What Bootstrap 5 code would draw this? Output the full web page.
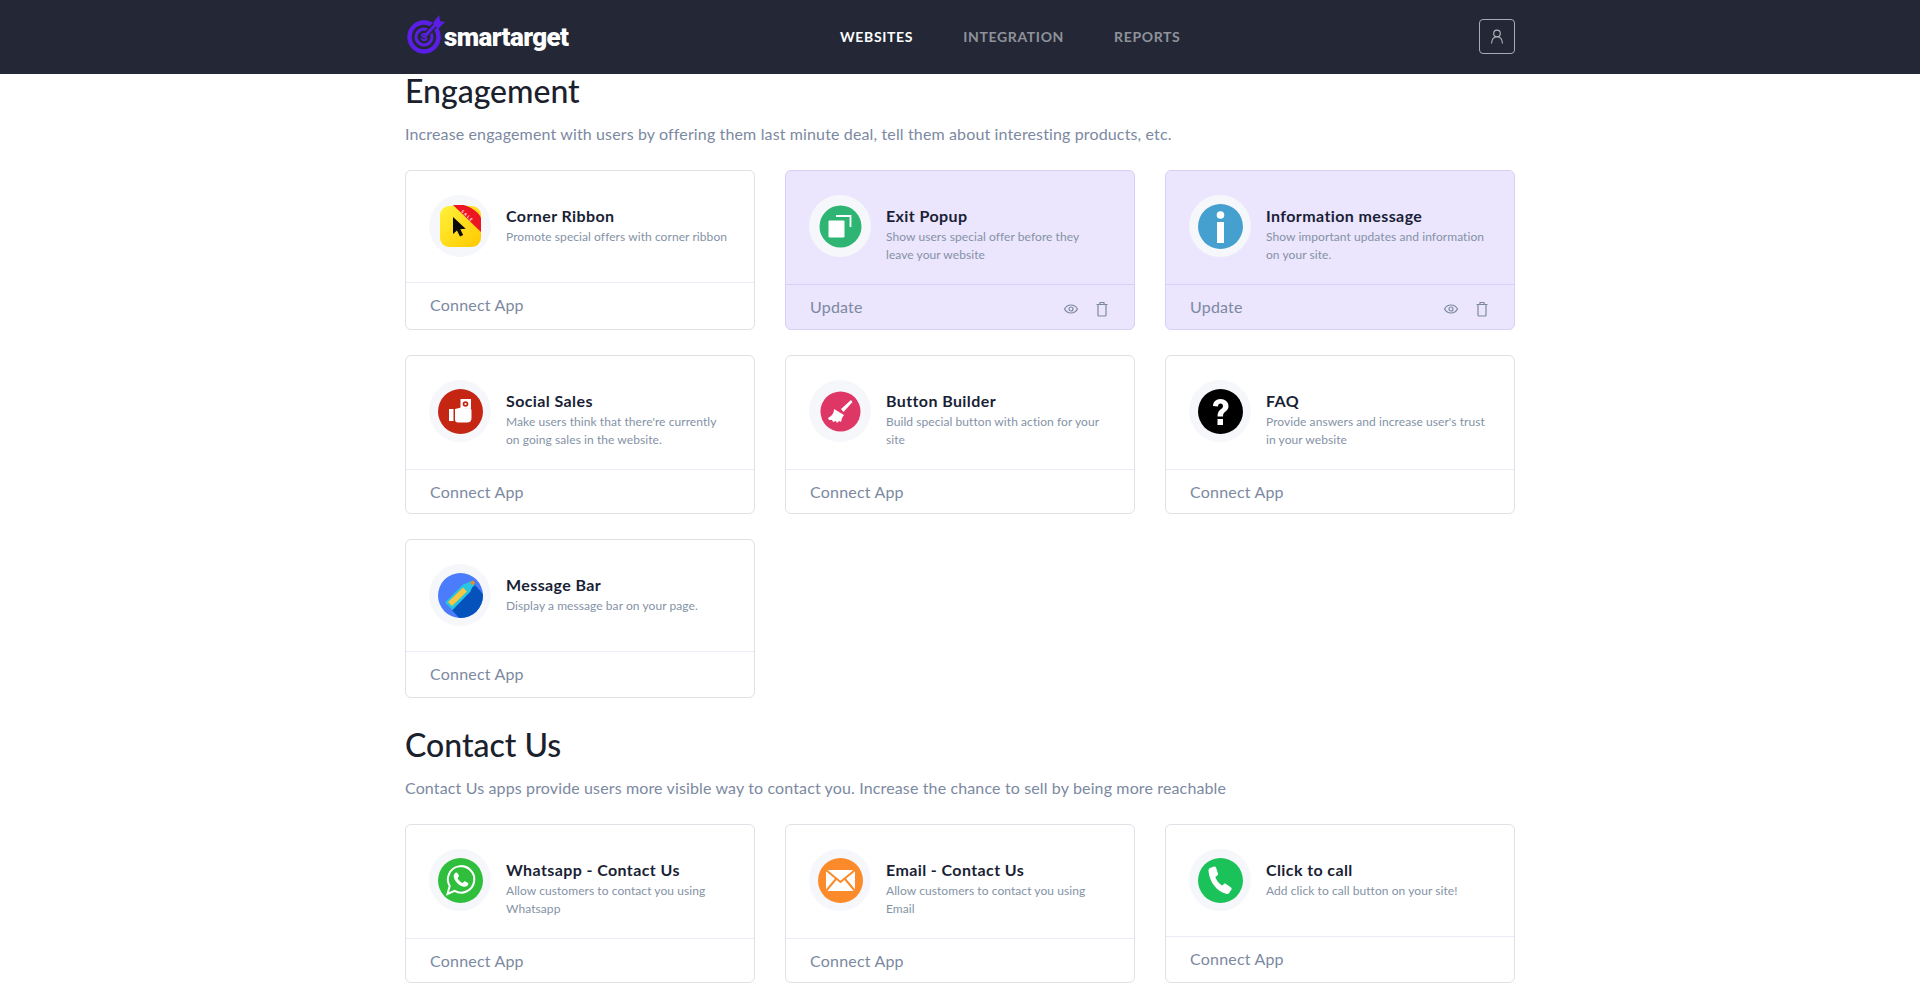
<!DOCTYPE html>
<html lang="en">
<head>
  <meta charset="UTF-8">
  <meta name="viewport" content="width=device-width, initial-scale=1.0">
  <title>Smartarget</title>
  <link href="https://cdn.jsdelivr.net/npm/bootstrap@5.3.3/dist/css/bootstrap.min.css" rel="stylesheet">
  <style>
    body {
      font-family: Lato, "Noto Sans", sans-serif;
      background: #fff;
      color: #1a1f36;
    }

    .page-wrap {
      width: 1110px;
      margin: 0 auto;
    }

    .top-bar {
      height: 74px;
      background: #242836;
    }

    .brand-link {
      width: 435px;
      padding-left: 2px;
      color: #fff;
      font-family: Roboto, sans-serif;
      font-weight: 900;
      font-size: 26px;
      letter-spacing: -0.6px;
      text-decoration: none;
    }

    .brand-link svg {
      margin-right: -1px;
      margin-top: -7px;
    }

    .brand-word {
      margin-top: 1px;
    }

    .top-link {
      font-size: 14px;
      font-weight: 700;
      letter-spacing: 0.65px;
      color: #8f929b;
      text-decoration: none;
      text-transform: uppercase;
      margin-right: 50px;
      margin-bottom: 2px;
    }

    .top-link.current {
      color: #fff;
    }

    .user-btn {
      width: 36px;
      height: 35px;
      margin-bottom: 2px;
      border: 1px solid #a8abb3;
      border-radius: 4px;
      background: transparent;
      padding: 0;
    }

    .section-title {
      font-size: 32px;
      font-weight: 500;
      line-height: 34px;
      margin: 0;
      color: #1a202c;
    }

    .contact-title {
      margin-top: 30px;
    }

    .section-sub {
      font-size: 16px;
      line-height: 24px;
      color: #7c89a1;
      margin: 14px 0 24px;
      letter-spacing: 0.135px;
    }

    .app-row {
      display: grid;
      grid-template-columns: repeat(3, 350px);
      column-gap: 30px;
      row-gap: 25px;
    }

    .app-card {
      min-height: 159px;
      border: 1px solid #e0e0e6;
      border-radius: 6px;
      display: flex;
      flex-direction: column;
    }

    .app-card.active-app {
      background: #ebe5fd;
      border-color: #d9cff7;
    }

    .app-body {
      display: flex;
      padding: 22px 23px 20px;
    }

    .icon-ring {
      flex: 0 0 62px;
      width: 62px;
      height: 62px;
      margin: 2px 15px 5px 0;
      border-radius: 50%;
      background: #f6f7fb;
      display: flex;
      align-items: center;
      justify-content: center;
    }

    .app-name {
      font-size: 16px;
      font-weight: 700;
      line-height: 22px;
      margin: 12px 0 1px;
      color: #1a1f36;
      letter-spacing: 0.4px;
    }

    .app-desc {
      font-size: 12px;
      line-height: 18px;
      margin: 0;
      color: #8492a6;
      letter-spacing: 0.07px;
    }

    .app-foot {
      flex-grow: 1;
      border-top: 1px solid #ecebfa;
      padding: 9.5px 24px;
      font-size: 16px;
      line-height: 24px;
      color: #7c89a1;
      letter-spacing: 0.2px;
    }

    .active-app .app-foot {
      border-top-color: #d9cff7;
      padding-top: 10px;
      padding-bottom: 10px;
    }

    .foot-icons {
      padding-right: 1px;
    }

    .foot-icons svg {
      display: block;
    }
  </style>
</head>
<body>

<!-- Navigation -->
<nav class="top-bar">
  <div class="page-wrap h-100 d-flex align-items-center">
    <a class="brand-link d-flex align-items-center" href="#">
      <svg width="38" height="40" viewBox="0 0 38 40">
        <circle cx="17" cy="23" r="14.5" fill="none" stroke="#5a1ee6" stroke-width="4.5"/>
        <circle cx="17" cy="23" r="8" fill="none" stroke="#5a1ee6" stroke-width="3"/>
        <path d="M17 23L29 10" stroke="#242836" stroke-width="6"/>
        <path d="M18 22L30 9" stroke="#5a1ee6" stroke-width="3"/>
        <path d="M26 9L32 1l1 6 5 1-7 7z" fill="#5a1ee6"/>
        <text x="17" y="27" text-anchor="middle" font-size="11" font-weight="900" fill="#5a1ee6">S</text>
      </svg>
      <span class="brand-word">smartarget</span>
    </a>
    <a class="top-link current" href="#">Websites</a>
    <a class="top-link" href="#">Integration</a>
    <a class="top-link" href="#">Reports</a>
    <button class="user-btn ms-auto d-flex align-items-center justify-content-center" type="button" aria-label="Account">
      <svg width="14" height="15" viewBox="0 0 14 15" fill="none" stroke="#b4b7be" stroke-width="1.1">
        <circle cx="7" cy="4.4" r="3.3"/>
        <path d="M1.5 14.5c.3-4 2.200-6.800 5.500-6.800s5.200 2.800 5.500 6.800"/>
      </svg>
    </button>
  </div>
</nav>

<main class="page-wrap">

  <!-- Engagement -->
  <h2 class="section-title">Engagement</h2>
  <p class="section-sub">Increase engagement with users by offering them last minute deal, tell them about interesting products, etc.</p>

  <div class="app-row">
    <div class="app-card">
      <div class="app-body">
        <div class="icon-ring">
          <svg width="41" height="42" viewBox="0 0 41 42">
            <defs>
              <linearGradient id="ribbonBg" x1="0" y1="0" x2="1" y2="1">
                <stop offset="0" stop-color="#fff23a"/>
                <stop offset="1" stop-color="#ffc800"/>
              </linearGradient>
            </defs>
            <rect y="1" width="41" height="41" rx="9" fill="url(#ribbonBg)"/>
            <path d="M13 0h9c6 0 19 8 19 14v13z" fill="#ee1522"/>
            <text transform="translate(24 3.500) rotate(43)" x="0" y="4.500" font-size="4" font-weight="700" letter-spacing="1.500" fill="#fff">SALE</text>
            <path d="M13 12v17l4-3.500 3 6 3.200-1.500-2.900-5.800 5.400-.5z" fill="#0b0b0b"/>
          </svg>
        </div>
        <div>
          <h3 class="app-name">Corner Ribbon</h3>
          <p class="app-desc">Promote special offers with corner ribbon</p>
        </div>
      </div>
      <div class="app-foot">Connect App</div>
    </div>

    <div class="app-card active-app">
      <div class="app-body">
        <div class="icon-ring">
          <svg width="45" height="45" viewBox="0 0 45 45">
            <circle cx="22.500" cy="22.500" r="21" fill="#2fb573"/>
            <path d="M18 12h14.500v11" fill="none" stroke="#fff" stroke-width="1.800"/>
            <rect x="10.500" y="16.500" width="16" height="17" rx="1" fill="#fff"/>
          </svg>
        </div>
        <div>
          <h3 class="app-name">Exit Popup</h3>
          <p class="app-desc">Show users special offer before they<br>leave your website</p>
        </div>
      </div>
      <div class="app-foot d-flex justify-content-between">
        <span>Update</span>
        <span class="foot-icons d-flex align-items-center gap-3 mt-1">
          <svg width="16" height="16" viewBox="0 0 16 16" fill="none" stroke="#7c89a1" stroke-width="1.200">
            <path d="M1.500 8C3 5.300 5.300 4 8 4s5 1.300 6.500 4C13 10.700 10.700 12 8 12S3 10.700 1.500 8z"/>
            <circle cx="8" cy="8" r="2"/>
          </svg>
          <svg width="14" height="16" viewBox="0 0 14 16" fill="none" stroke="#7c89a1" stroke-width="1.200">
            <path d="M1.500 3.500h11M3 3.500V14a1 1 0 0 0 1 1h6a1 1 0 0 0 1-1V3.500M5 3.500V1.500h4v2"/>
          </svg>
        </span>
      </div>
    </div>

    <div class="app-card active-app">
      <div class="app-body">
        <div class="icon-ring">
          <svg width="45" height="45" viewBox="0 0 45 45">
            <circle cx="22.500" cy="22.500" r="22.500" fill="#45a0cf"/>
            <circle cx="22.500" cy="11" r="3.800" fill="#fff"/>
            <rect x="19" y="18" width="7" height="21" fill="#fff"/>
          </svg>
        </div>
        <div>
          <h3 class="app-name">Information message</h3>
          <p class="app-desc">Show important updates and information<br>on your site.</p>
        </div>
      </div>
      <div class="app-foot d-flex justify-content-between">
        <span>Update</span>
        <span class="foot-icons d-flex align-items-center gap-3 mt-1">
          <svg width="16" height="16" viewBox="0 0 16 16" fill="none" stroke="#7c89a1" stroke-width="1.200">
            <path d="M1.500 8C3 5.300 5.300 4 8 4s5 1.300 6.500 4C13 10.700 10.700 12 8 12S3 10.700 1.500 8z"/>
            <circle cx="8" cy="8" r="2"/>
          </svg>
          <svg width="14" height="16" viewBox="0 0 14 16" fill="none" stroke="#7c89a1" stroke-width="1.200">
            <path d="M1.500 3.500h11M3 3.500V14a1 1 0 0 0 1 1h6a1 1 0 0 0 1-1V3.500M5 3.500V1.500h4v2"/>
          </svg>
        </span>
      </div>
    </div>

    <div class="app-card">
      <div class="app-body">
        <div class="icon-ring">
          <svg width="45" height="45" viewBox="0 0 45 45">
            <circle cx="22.500" cy="22.500" r="22.500" fill="#c42613"/>
            <rect x="11" y="20" width="4.500" height="12" fill="#fff"/>
            <path d="M17 20l6-1.500 6 1 3.500-.5 1 2v8c0 3-1.500 4.500-4.500 4.500H20c-2 0-3-1-3-3z" fill="#fff"/>
            <path d="M22.500 10h10.500v9.500l-3 .5-7.500-1z" fill="#fff"/>
            <circle cx="27.500" cy="15" r="2.800" fill="#c42613"/>
            <circle cx="27.500" cy="15" r="1.100" fill="#fff"/>
          </svg>
        </div>
        <div>
          <h3 class="app-name">Social Sales</h3>
          <p class="app-desc">Make users think that there're currently<br>on going sales in the website.</p>
        </div>
      </div>
      <div class="app-foot">Connect App</div>
    </div>

    <div class="app-card">
      <div class="app-body">
        <div class="icon-ring">
          <svg width="45" height="45" viewBox="0 0 45 45">
            <circle cx="22.500" cy="22.500" r="20" fill="#de3766"/>
            <path d="M23 20L33 11l1.500 2-9 10z" fill="#fff"/>
            <path d="M16 20l10 6-2 3-1 4-2-1-2 2-1-2-3 1-1-2-3 0-1-2 3-2c2-2 3-4 3-7z" fill="#fff"/>
          </svg>
        </div>
        <div>
          <h3 class="app-name">Button Builder</h3>
          <p class="app-desc">Build special button with action for your<br>site</p>
        </div>
      </div>
      <div class="app-foot">Connect App</div>
    </div>

    <div class="app-card">
      <div class="app-body">
        <div class="icon-ring">
          <svg width="45" height="45" viewBox="0 0 45 45">
            <circle cx="22.500" cy="22.500" r="22.500" fill="#000"/>
            <path d="M15 17c0-4 3-7 7.500-7s8 3 8 7c0 3-1.500 4.500-3.500 6-1.500 1-2 2-2 4.500h-5.500c0-3.500 1-5.500 3-7 1.500-1 2.500-2 2.500-3.500 0-1.500-1-2.500-2.500-2.500S20 15.500 20 17.500z" fill="#fff"/>
            <rect x="19.500" y="30" width="5.500" height="6" fill="#fff"/>
          </svg>
        </div>
        <div>
          <h3 class="app-name">FAQ</h3>
          <p class="app-desc">Provide answers and increase user's trust<br>in your website</p>
        </div>
      </div>
      <div class="app-foot">Connect App</div>
    </div>

    <div class="app-card">
      <div class="app-body">
        <div class="icon-ring">
          <svg width="45" height="45" viewBox="0 0 45 45">
            <defs>
              <clipPath id="barClip"><circle cx="22.500" cy="22.500" r="22.500"/></clipPath>
            </defs>
            <circle cx="22.500" cy="22.500" r="22.500" fill="#4a7cfb"/>
            <path d="M36 11L46 22V46H22L14 37z" fill="#0552bd" clip-path="url(#barClip)"/>
            <path d="M33 8l4 4-3 2.500-1.500 4-18 18.500-7.500-7.500L25 11.500l4-1.500z" fill="#27c6e0"/>
            <path d="M10 29l15-14.500 4 4L14 33z" fill="#f7c642"/>
            <rect x="33" y="8" width="3.500" height="3.500" transform="rotate(45 34.750 9.750)" fill="#f08a24"/>
          </svg>
        </div>
        <div>
          <h3 class="app-name">Message Bar</h3>
          <p class="app-desc">Display a message bar on your page.</p>
        </div>
      </div>
      <div class="app-foot">Connect App</div>
    </div>
  </div>

  <!-- Contact Us -->
  <h2 class="section-title contact-title">Contact Us</h2>
  <p class="section-sub">Contact Us apps provide users more visible way to contact you. Increase the chance to sell by being more reachable</p>

  <div class="app-row">
    <div class="app-card">
      <div class="app-body">
        <div class="icon-ring">
          <svg width="45" height="45" viewBox="0 0 45 45">
            <circle cx="22.500" cy="22.500" r="22.500" fill="#2fbf3c"/>
            <path d="M9.500 36l2.200-8a13.200 13.200 0 1 1 5 4.900z" fill="none" stroke="#fff" stroke-width="2"/>
            <path d="M18 14.500c-1 .3-2.300 1.800-2.300 3.800 0 4 5.500 10.500 11 10.500 2 0 3.700-1.300 3.700-3.200 0-.5-3.300-2.300-3.900-2.300-.6 0-1.100 1.600-1.800 1.600-1.300 0-5-3.400-5-5 0-.6 1.300-1.200 1.300-1.900 0-.7-1.500-3.700-3-3.500z" fill="#fff"/>
          </svg>
        </div>
        <div>
          <h3 class="app-name">Whatsapp - Contact Us</h3>
          <p class="app-desc">Allow customers to contact you using<br>Whatsapp</p>
        </div>
      </div>
      <div class="app-foot">Connect App</div>
    </div>

    <div class="app-card">
      <div class="app-body">
        <div class="icon-ring">
          <svg width="45" height="45" viewBox="0 0 45 45">
            <circle cx="22.500" cy="22.500" r="22.500" fill="#fb8a2b"/>
            <rect x="8" y="12" width="29" height="21" fill="#fff"/>
            <path d="M8 12l14.500 12L37 12M8 33l10-12M37 33L27 21" fill="none" stroke="#fb8a2b" stroke-width="2"/>
          </svg>
        </div>
        <div>
          <h3 class="app-name">Email - Contact Us</h3>
          <p class="app-desc">Allow customers to contact you using<br>Email</p>
        </div>
      </div>
      <div class="app-foot">Connect App</div>
    </div>

    <div class="app-card">
      <div class="app-body">
        <div class="icon-ring">
          <svg width="45" height="45" viewBox="0 0 45 45">
            <circle cx="22.500" cy="22.500" r="22.500" fill="#1bc25a"/>
            <path d="M12 10l4-1.500c1-.3 1.700.1 2 1l2 6c.2.800 0 1.400-.7 1.900l-2 1.500c1 3 3.500 6.500 6.700 8.600l2-1.600c.6-.5 1.300-.5 2 0l5 3.500c.7.500.9 1.200.4 2l-2.200 3.600c-.6.900-1.400 1.200-2.500.9C19 33.500 11.500 24.500 10.500 13c-.1-1.500.4-2.500 1.500-3z" fill="#fff"/>
          </svg>
        </div>
        <div>
          <h3 class="app-name">Click to call</h3>
          <p class="app-desc">Add click to call button on your site!</p>
        </div>
      </div>
      <div class="app-foot">Connect App</div>
    </div>
  </div>
</main>

<script src="https://cdn.jsdelivr.net/npm/bootstrap@5.3.3/dist/js/bootstrap.bundle.min.js"></script>
</body>
</html>
